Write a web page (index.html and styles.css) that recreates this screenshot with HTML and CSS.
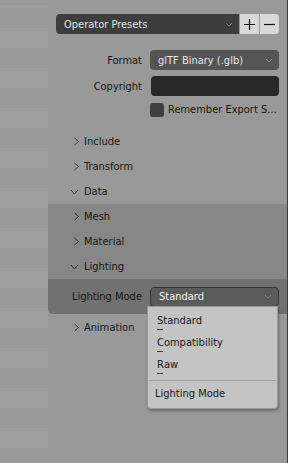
FILE: index.html
```html
<!DOCTYPE html>
<html>
<head>
    <meta charset="UTF-8">
    <title>Export glTF</title>
    <link rel="stylesheet" href="styles.css">
</head>
<body>
    <div class="screen">
        <div class="sidebar"></div>
        <div class="panel">
            <div class="presets">
                <div class="preset-menu">
                    <span>Operator Presets</span>
                    <svg class="arrow" width="8" height="5" viewBox="0 0 8 5"><path d="M1 1 L4 4 L7 1" fill="none" stroke="#7a7a7a" stroke-width="1"/></svg>
                </div>
                <div class="preset-btn">
                    <svg width="11" height="11" viewBox="0 0 11 11"><path d="M5.5 0 V11 M0 5.5 H11" stroke="#111" stroke-width="1.2"/></svg>
                </div>
                <div class="preset-btn last">
                    <svg width="11" height="11" viewBox="0 0 11 11"><path d="M0 5.5 H11" stroke="#111" stroke-width="1.2"/></svg>
                </div>
            </div>

            <div class="prop-row">
                <div class="prop-label">Format</div>
                <div class="dropdown">
                    <span>glTF Binary (.glb)</span>
                    <svg class="arrow" width="8" height="5" viewBox="0 0 8 5"><path d="M1 1 L4 4 L7 1" fill="none" stroke="#8a8a8a" stroke-width="1"/></svg>
                </div>
            </div>
            <div class="prop-row">
                <div class="prop-label">Copyright</div>
                <div class="text-field"></div>
            </div>
            <div class="prop-row check-row">
                <div class="prop-label"></div>
                <div class="checkbox"></div>
                <span class="check-text">Remember Export S...</span>
            </div>

            <div class="sections">
                <div class="section"><svg class="chev" width="6" height="9" viewBox="0 0 6 9"><path d="M1 1 L5 4.5 L1 8" fill="none" stroke="#3a3a3a"/></svg>Include</div>
                <div class="section"><svg class="chev" width="6" height="9" viewBox="0 0 6 9"><path d="M1 1 L5 4.5 L1 8" fill="none" stroke="#3a3a3a"/></svg>Transform</div>
                <div class="section"><svg class="chev down" width="9" height="6" viewBox="0 0 9 6"><path d="M1 1 L4.5 5 L8 1" fill="none" stroke="#3a3a3a"/></svg>Data</div>

                <div class="subpanel">
                    <div class="section"><svg class="chev" width="6" height="9" viewBox="0 0 6 9"><path d="M1 1 L5 4.5 L1 8" fill="none" stroke="#2e2e2e"/></svg>Mesh</div>
                    <div class="section"><svg class="chev" width="6" height="9" viewBox="0 0 6 9"><path d="M1 1 L5 4.5 L1 8" fill="none" stroke="#2e2e2e"/></svg>Material</div>
                    <div class="section"><svg class="chev down" width="9" height="6" viewBox="0 0 9 6"><path d="M1 1 L4.5 5 L8 1" fill="none" stroke="#2e2e2e"/></svg>Lighting</div>
                    <div class="mode-row">
                        <div class="prop-label">Lighting Mode</div>
                        <div class="dropdown active">
                            <span>Standard</span>
                            <svg class="arrow" width="8" height="5" viewBox="0 0 8 5"><path d="M1 1 L4 4 L7 1" fill="none" stroke="#7c7c7c" stroke-width="1"/></svg>
                            <div class="popup">
                                <div class="item"><u>S</u>tandard</div>
                                <div class="item"><u>C</u>ompatibility</div>
                                <div class="item"><u>R</u>aw</div>
                                <div class="sep"></div>
                                <div class="popup-title">Lighting Mode</div>
                            </div>
                        </div>
                    </div>
                </div>

                <div class="section"><svg class="chev" width="6" height="9" viewBox="0 0 6 9"><path d="M1 1 L5 4.5 L1 8" fill="none" stroke="#3a3a3a"/></svg>Animation</div>
            </div>
        </div>
    </div>
</body>
</html>
```
FILE: styles.css
```css
body {
    margin: 0;
    padding: 0;
    font-family: "DejaVu Sans Condensed", "DejaVu Sans", sans-serif;
    font-size: 11px;
    background-color: #999999;
    color: #161616;
}
.screen {
    display: flex;
    width: 288px;
    height: 463px;
    overflow: hidden;
}
.sidebar {
    width: 48px;
    flex: none;
    background: repeating-linear-gradient(to bottom, #999999 0, #999999 20px, #9f9f9f 20px, #9f9f9f 40px);
    background-position: 0 8px;
}
.panel {
    width: 239px;
    flex: none;
    border-right: 1px solid #3c3c3c;
    padding-top: 14px;
}
.presets {
    display: flex;
    height: 20px;
    margin: 0 8px;
}
.preset-menu {
    flex: 1;
    display: flex;
    align-items: center;
    justify-content: space-between;
    background-color: #3d3d3d;
    color: #e2e2e2;
    border-radius: 4px 0 0 4px;
    padding: 0 6px 0 8px;
}
.preset-btn {
    width: 19px;
    display: flex;
    align-items: center;
    justify-content: center;
    background-color: #d9d9d9;
    border-left: 1px solid #9a9a9a;
}
.preset-btn.last {
    border-radius: 0 4px 4px 0;
}
.prop-row {
    display: flex;
    align-items: center;
    height: 20px;
    margin-top: 6px;
    padding-right: 8px;
}
.presets + .prop-row {
    margin-top: 16px;
}
.prop-label {
    width: 94px;
    flex: none;
    text-align: right;
    padding-right: 8px;
}
.dropdown {
    position: relative;
    flex: 1;
    height: 20px;
    display: flex;
    align-items: center;
    justify-content: space-between;
    background-color: #545454;
    color: #e6e6e6;
    border-radius: 4px;
    padding: 0 6px 0 8px;
}
.text-field {
    flex: 1;
    height: 20px;
    background-color: #282828;
    border-radius: 4px;
    margin-left: 1px;
}
.check-row {
    height: 15px;
    margin-top: 6px;
}
.checkbox {
    width: 14px;
    height: 14px;
    flex: none;
    background-color: #3f3f3f;
    border-radius: 3px;
    margin-right: 4px;
}
.check-text {
    white-space: nowrap;
}
.sections {
    margin-top: 12px;
}
.section {
    height: 25px;
    display: flex;
    align-items: center;
    padding-left: 24px;
}
.chev {
    width: 9px;
    margin-right: 3px;
    flex: none;
}
.chev.down {
    margin-left: -2px;
    margin-right: 5px;
}
.subpanel {
    background-color: #878787;
    border-radius: 0 0 0 5px;
}
.mode-row {
    display: flex;
    align-items: center;
    height: 35px;
    padding-right: 8px;
    background-color: #717171;
    border-radius: 0 0 0 5px;
}
.mode-row + * {
    margin-top: 0;
}
.subpanel + .section {
    margin-top: 1px;
}
.dropdown.active {
    background-color: #5a5a5a;
    border: 1px solid #363636;
    height: 18px;
    color: #f2f2f2;
}
.popup {
    position: absolute;
    left: -4px;
    top: 18px;
    width: 129px;
    padding: 4px 0 4px;
    background-color: #c4c4c4;
    border: 1px solid #9a9a9a;
    border-radius: 0 0 4px 4px;
    box-shadow: 1px 2px 3px rgba(0, 0, 0, 0.3);
    color: #161616;
}
.item {
    height: 22px;
    line-height: 20px;
    padding-left: 9px;
}
.item u {
    text-decoration: none;
    position: relative;
}
.item u::after {
    content: "";
    position: absolute;
    left: 0;
    top: 15px;
    width: 6px;
    height: 1px;
    background-color: #3a3a3a;
}
.sep {
    height: 1px;
    background-color: #a4a4a4;
    margin: 3px 1px 3px;
}
.popup-title {
    height: 20px;
    line-height: 20px;
    padding-left: 7px;
}
```
